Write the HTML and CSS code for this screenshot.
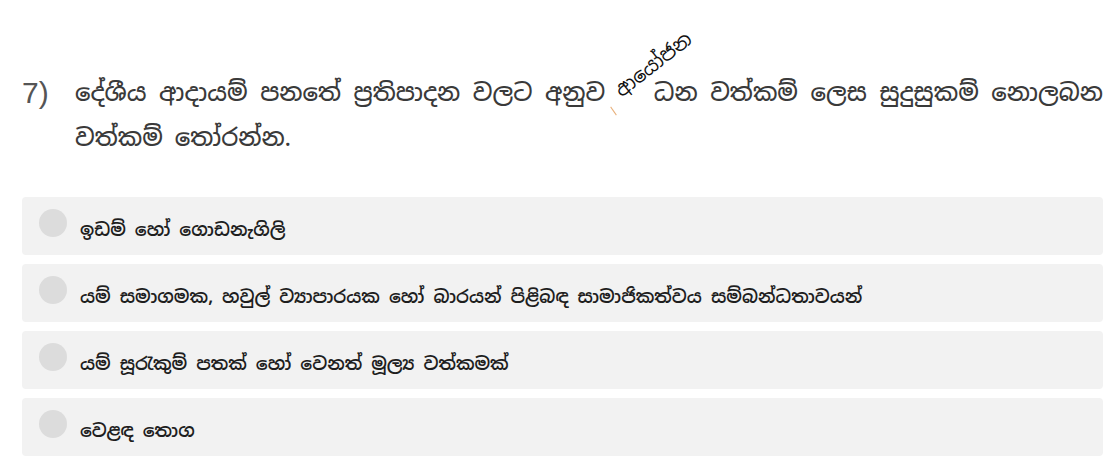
FILE: index.html
```html
<!DOCTYPE html>
<html lang="si">
<head>
<meta charset="utf-8">
<link rel="stylesheet" href="styles.css">
</head>
<body>
<div class="page">
  <div class="question">
    <span class="qnum">7)</span>
    <p class="qtext">දේශීය ආදායම් පනතේ ප්‍රතිපාදන වලට අනුව <span class="fix"><span class="erased"></span>ධන<span class="note">ආයෝජන</span><span class="tick"></span></span> වත්කම් ලෙස සුදුසුකම් නොලබන වත්කම් තෝරන්න.</p>
  </div>
  <div class="options">
    <label class="opt"><span class="radio"></span><span class="otext">ඉඩම් හෝ ගොඩනැගිලි</span></label>
    <label class="opt"><span class="radio"></span><span class="otext">යම් සමාගමක, හවුල් ව්‍යාපාරයක හෝ බාරයන් පිළිබඳ සාමාජිකත්වය සම්බන්ධතාවයන්</span></label>
    <label class="opt"><span class="radio"></span><span class="otext">යම් සූරැකුම් පතක් හෝ වෙනත් මූල්‍ය වත්කමක්</span></label>
    <label class="opt"><span class="radio"></span><span class="otext">වෙළඳ තොග</span></label>
  </div>
</div>
</body>
</html>
```

FILE: styles.css
```css
html, body {
  margin: 0;
  padding: 0;
  background: #fff;
}
body {
  font-family: "Noto Sans Sinhala", "Iskoola Pota", "Noto Sans", "DejaVu Sans", sans-serif;
}
.page {
  width: 1081px;
  padding: 70px 0 0 22px;
}
.question {
  display: flex;
  align-items: flex-start;
  gap: 26px;
}
.qnum {
  font-family: "Liberation Sans", Arial, sans-serif;
  font-size: 30px;
  color: #555;
  line-height: 45px;
  width: 27px;
}
.qtext {
  margin: 0;
  font-size: 24px;
  font-weight: 500;
  line-height: 45px;
  color: #3a3a3a;
  flex: 1;
  text-align: justify;
}
.fix {
  position: relative;
}
.erased {
  display: inline-block;
  width: 36px;
}
.note {
  position: absolute;
  left: 6px;
  top: 2px;
  font-size: 20px;
  line-height: 22px;
  font-weight: 400;
  color: #111;
  white-space: nowrap;
  transform: rotate(-38deg);
  transform-origin: left bottom;
}
.tick {
  position: absolute;
  left: -5px;
  top: 29px;
  width: 1px;
  height: 10px;
  background: #e8b07a;
  transform: rotate(-35deg);
}
.options {
  display: flex;
  flex-direction: column;
  gap: 9px;
  margin-top: 37px;
}
.opt {
  display: flex;
  align-items: center;
  background: #f2f2f2;
  border-radius: 4px;
  height: 58px;
  padding-left: 17px;
  box-sizing: border-box;
}
.radio {
  width: 28px;
  height: 28px;
  border-radius: 50%;
  background: #dcdcdc;
  flex: none;
  margin-top: -6px;
}
.otext {
  margin-left: 13px;
  font-size: 18px;
  font-weight: 600;
  color: #1e1e1e;
  margin-top: 6px;
}
```
